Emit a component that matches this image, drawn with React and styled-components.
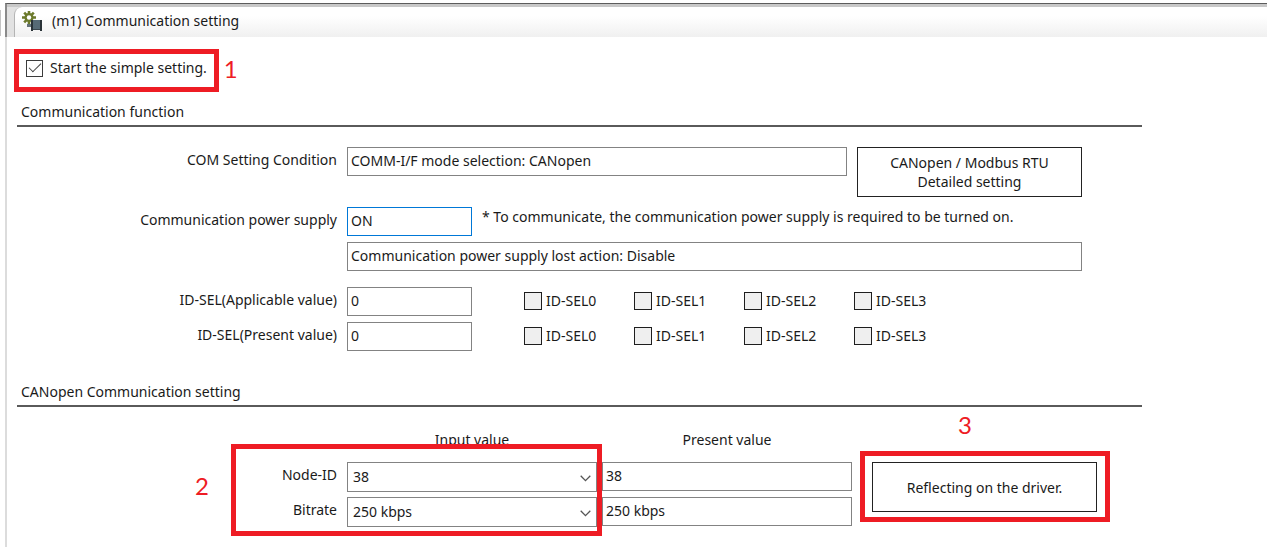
import React from "react";
import styled, { createGlobalStyle } from "styled-components";

const GlobalStyle = createGlobalStyle`
  *, *::before, *::after { box-sizing: border-box; }
  body {
    margin: 0;
    background: #fff;
    color: #1a1a1a;
    font: 14px/20px "Noto Sans", "Open Sans", sans-serif;
  }
  input, select, button { font: inherit; color: inherit; margin: 0; border-radius: 0; }
`;

const Shell = styled.div`
  display: flex;
  min-height: 100vh;
  padding-top: 3px;
  overflow: hidden;
`;

const Gutter = styled.div`
  flex: none;
  width: 5px;
  padding-top: 7px;
  &::before {
    content: "";
    display: block;
    width: 1px;
    height: 26px;
    background: #c4c4c4;
  }
`;

const Editor = styled.main`
  flex: 1;
  min-width: 0;
  border-left: 2px solid #dcdcdc;
`;

const TabBar = styled.header`
  display: flex;
  height: 34px;
  margin-left: -2px;
  border-top: 1px solid #5c5c5c;
  border-left: 2px solid #8a8a8a;
  background: #e2e2e2;
  box-shadow: inset 0 3px #c8c8c8;
  padding: 3px 0 0 7px;
`;

const Tab = styled.h1`
  flex: 1;
  display: flex;
  align-items: center;
  gap: 9px;
  margin: 0;
  padding: 0 0 3px 7px;
  border-left: 1px solid #b4b4b4;
  border-top-left-radius: 8px;
  background: linear-gradient(#fff 30%, #f0f0f0);
  font-size: 14px;
  font-weight: 400;
`;

const Content = styled.div`
  max-width: 1135px;
  padding: 12px 0 10px 10px;
`;

const StartOption = styled.label`
  position: relative;
  display: inline-flex;
  align-items: center;
  gap: 7px;
  height: 43px;
  padding: 0 12px 5px 9px;
`;

const Tick = styled.input.attrs({ type: "checkbox" })`
  appearance: none;
  flex: none;
  width: ${(p) => (p.$muted ? 18 : 17)}px;
  height: ${(p) => (p.$muted ? 18 : 17)}px;
  border: 1px solid ${(p) => (p.$muted ? "#1e1e1e" : "#3c3c3c")};
  background: ${(p) => (p.$muted ? "#efefef" : "#fff")};
  display: grid;
  place-items: center;
  &:checked::before {
    content: "";
    width: 12px;
    height: 6px;
    border: solid #3c3c3c;
    border-width: 0 0 1px 1px;
    transform: translateY(-2px) rotate(-45deg);
  }
`;

const Highlight = styled.span`
  position: absolute;
  inset: ${(p) => p.$inset};
  grid-area: ${(p) => p.$area || "auto"};
  border: 5px solid #ee1c24;
  pointer-events: none;
`;

const Marker = styled.span`
  position: absolute;
  top: ${(p) => p.$top};
  left: ${(p) => p.$left};
  color: #ee1c24;
  font: 24px/28px Lato, sans-serif;
`;

const SectionTitle = styled.h2`
  margin: 0 0 20px;
  padding: 0 4px 3px;
  border-bottom: 2px solid #5a5a5a;
  font-size: 14px;
  font-weight: 400;
`;

const Section = styled.section`
  padding-top: 10px;
  & + & { padding-top: 31px; }
`;

const FormGrid = styled.div`
  display: grid;
  grid-template-columns: 320px 1fr;
  column-gap: 10px;
  row-gap: 6px;
  margin-bottom: ${(p) => p.$after || 0}px;
`;

const Caption = styled.label`
  padding-top: 3px;
  text-align: right;
`;

const Line = styled.div`
  grid-column: 2;
  display: flex;
  align-items: flex-start;
  gap: 10px;
  max-width: 735px;
`;

const Field = styled.input.attrs({ type: "text" })`
  flex: ${(p) => (p.$width ? "none" : 1)};
  min-width: 0;
  width: ${(p) => (p.$width ? p.$width + "px" : "100%")};
  height: 29px;
  padding: 0 3px 2px;
  border: 1px solid ${(p) => (p.$tone === "active" ? "#0078d7" : "#838383")};
  background: #fff;
  outline: 0;
`;

const Action = styled.button`
  flex: none;
  width: 225px;
  height: 50px;
  padding: 0;
  border: 1px solid #222;
  background: #fff;
  line-height: 19px;
`;

const Checks = styled.div`
  display: grid;
  grid-template-columns: repeat(4, 110px);
  padding-left: 42px;
`;

const Check = styled.label`
  display: flex;
  align-items: center;
  gap: 4px;
  height: 28px;
`;

const ValueGrid = styled.div`
  position: relative;
  display: grid;
  grid-template-columns: 325px 250px 250px 225px;
  column-gap: 5px;
  row-gap: 6px;
  margin-top: 23px;
`;

const ValueCaption = styled(Caption)`
  grid-column: 1;
  padding-right: 5px;
`;

const ColumnTitle = styled.div`
  grid-column: ${(p) => p.$col};
  height: 26px;
  text-align: center;
`;

const Picker = styled.div`
  position: relative;
  height: 29px;
  svg {
    position: absolute;
    right: 6px;
    top: 13px;
    pointer-events: none;
  }
`;

const Select = styled.select`
  appearance: none;
  width: 100%;
  height: 30px;
  padding: 0 24px 0 5px;
  border: 1px solid #838383;
  background: #fff;
`;

const ApplyCell = styled.div`
  position: relative;
  grid-area: 2 / 4 / 4 / 5;
  margin-left: 15px;
  width: 225px;
  height: 50px;
`;

function MotorIcon() {
  return (
    <svg width="21" height="20" viewBox="0 0 21 20" aria-hidden="true">
      <g stroke="#6c7a2c" strokeWidth="2.6">
        <path d="M7 0v13M0 6.5h14M2.2 1.7l9.6 9.6M11.8 1.7l-9.6 9.6" />
      </g>
      <circle cx="7" cy="6.5" r="4.6" fill="#6c7a2c" />
      <circle cx="7" cy="6.5" r="2.2" fill="#fff" />
      <path d="M5 13h5v3H5z" fill="#66737a" />
      <path d="M9 9h2v11H9z" fill="#2a3338" />
      <path d="M11 9h7v10h-7z" fill="#566a75" />
      <path d="M18 9h2v11h-2z" fill="#2a3338" />
      <path d="M11 18h7v1h-7z" fill="#3a464d" />
    </svg>
  );
}

function Chevron() {
  return (
    <svg width="11" height="7" viewBox="0 0 11 7" fill="none" stroke="#555" strokeWidth="1.3" aria-hidden="true">
      <path d="M.7.8l4.8 4.8L10.3.8" />
    </svg>
  );
}

function SelectorRow({ id, label }) {
  return (
    <>
      <Caption htmlFor={id}>{label}</Caption>
      <Line>
        <Field id={id} $width={125} defaultValue="0" />
        <Checks>
          {[0, 1, 2, 3].map((n) => (
            <Check key={n}>
              <Tick $muted />
              ID-SEL{n}
            </Check>
          ))}
        </Checks>
      </Line>
    </>
  );
}

function ValueRow({ id, label, options, value }) {
  return (
    <>
      <ValueCaption htmlFor={id}>{label}</ValueCaption>
      <Picker>
        <Select id={id} defaultValue={value}>
          {options.map((o) => (
            <option key={o}>{o}</option>
          ))}
        </Select>
        <Chevron />
      </Picker>
      <Field aria-label={`${label} present value`} readOnly value={value} />
    </>
  );
}

export default function App() {
  return (
    <>
      <GlobalStyle />
      <Shell>
        <Gutter />
        <Editor>
          <TabBar>
            <Tab>
              <MotorIcon />
              (m1) Communication setting
            </Tab>
          </TabBar>
          <Content>
            <StartOption>
              <Highlight $inset="0 0 0 -3px" />
              <Tick defaultChecked />
              Start the simple setting.
              <Marker $top="6px" $left="calc(100% + 5px)">1</Marker>
            </StartOption>

            <Section>
              <SectionTitle>Communication function</SectionTitle>
              <FormGrid $after={10}>
                <Caption htmlFor="condition">COM Setting Condition</Caption>
                <Line>
                  <Field id="condition" defaultValue="COMM-I/F mode selection: CANopen" />
                  <Action type="button">
                    CANopen / Modbus RTU
                    <br />
                    Detailed setting
                  </Action>
                </Line>
              </FormGrid>
              <FormGrid $after={16}>
                <Caption htmlFor="power">Communication power supply</Caption>
                <Line>
                  <Field id="power" $width={125} $tone="active" defaultValue="ON" />
                  <span>* To communicate, the communication power supply is required to be turned on.</span>
                </Line>
                <Line>
                  <Field
                    aria-label="Power supply lost action"
                    defaultValue="Communication power supply lost action: Disable"
                  />
                </Line>
              </FormGrid>
              <FormGrid>
                <SelectorRow id="applicable" label="ID-SEL(Applicable value)" />
                <SelectorRow id="present" label="ID-SEL(Present value)" />
              </FormGrid>
            </Section>

            <Section>
              <SectionTitle>CANopen Communication setting</SectionTitle>
              <ValueGrid>
                <ColumnTitle $col={2}>Input value</ColumnTitle>
                <ColumnTitle $col={3}>Present value</ColumnTitle>
                <ValueRow id="node" label="Node-ID" value="38" options={["37", "38", "39"]} />
                <ValueRow id="bitrate" label="Bitrate" value="250 kbps" options={["125 kbps", "250 kbps", "500 kbps"]} />
                <ApplyCell>
                  <Action type="button">Reflecting on the driver.</Action>
                  <Highlight $inset="-11px -13px -10px -12px" />
                  <Marker $top="-51px" $left="86px">3</Marker>
                </ApplyCell>
                <Highlight $area="2 / 1 / 4 / 3" $inset="-18px -5px -10px 214px" />
                <Marker $top="42px" $left="178px">2</Marker>
              </ValueGrid>
            </Section>
          </Content>
        </Editor>
      </Shell>
    </>
  );
}
